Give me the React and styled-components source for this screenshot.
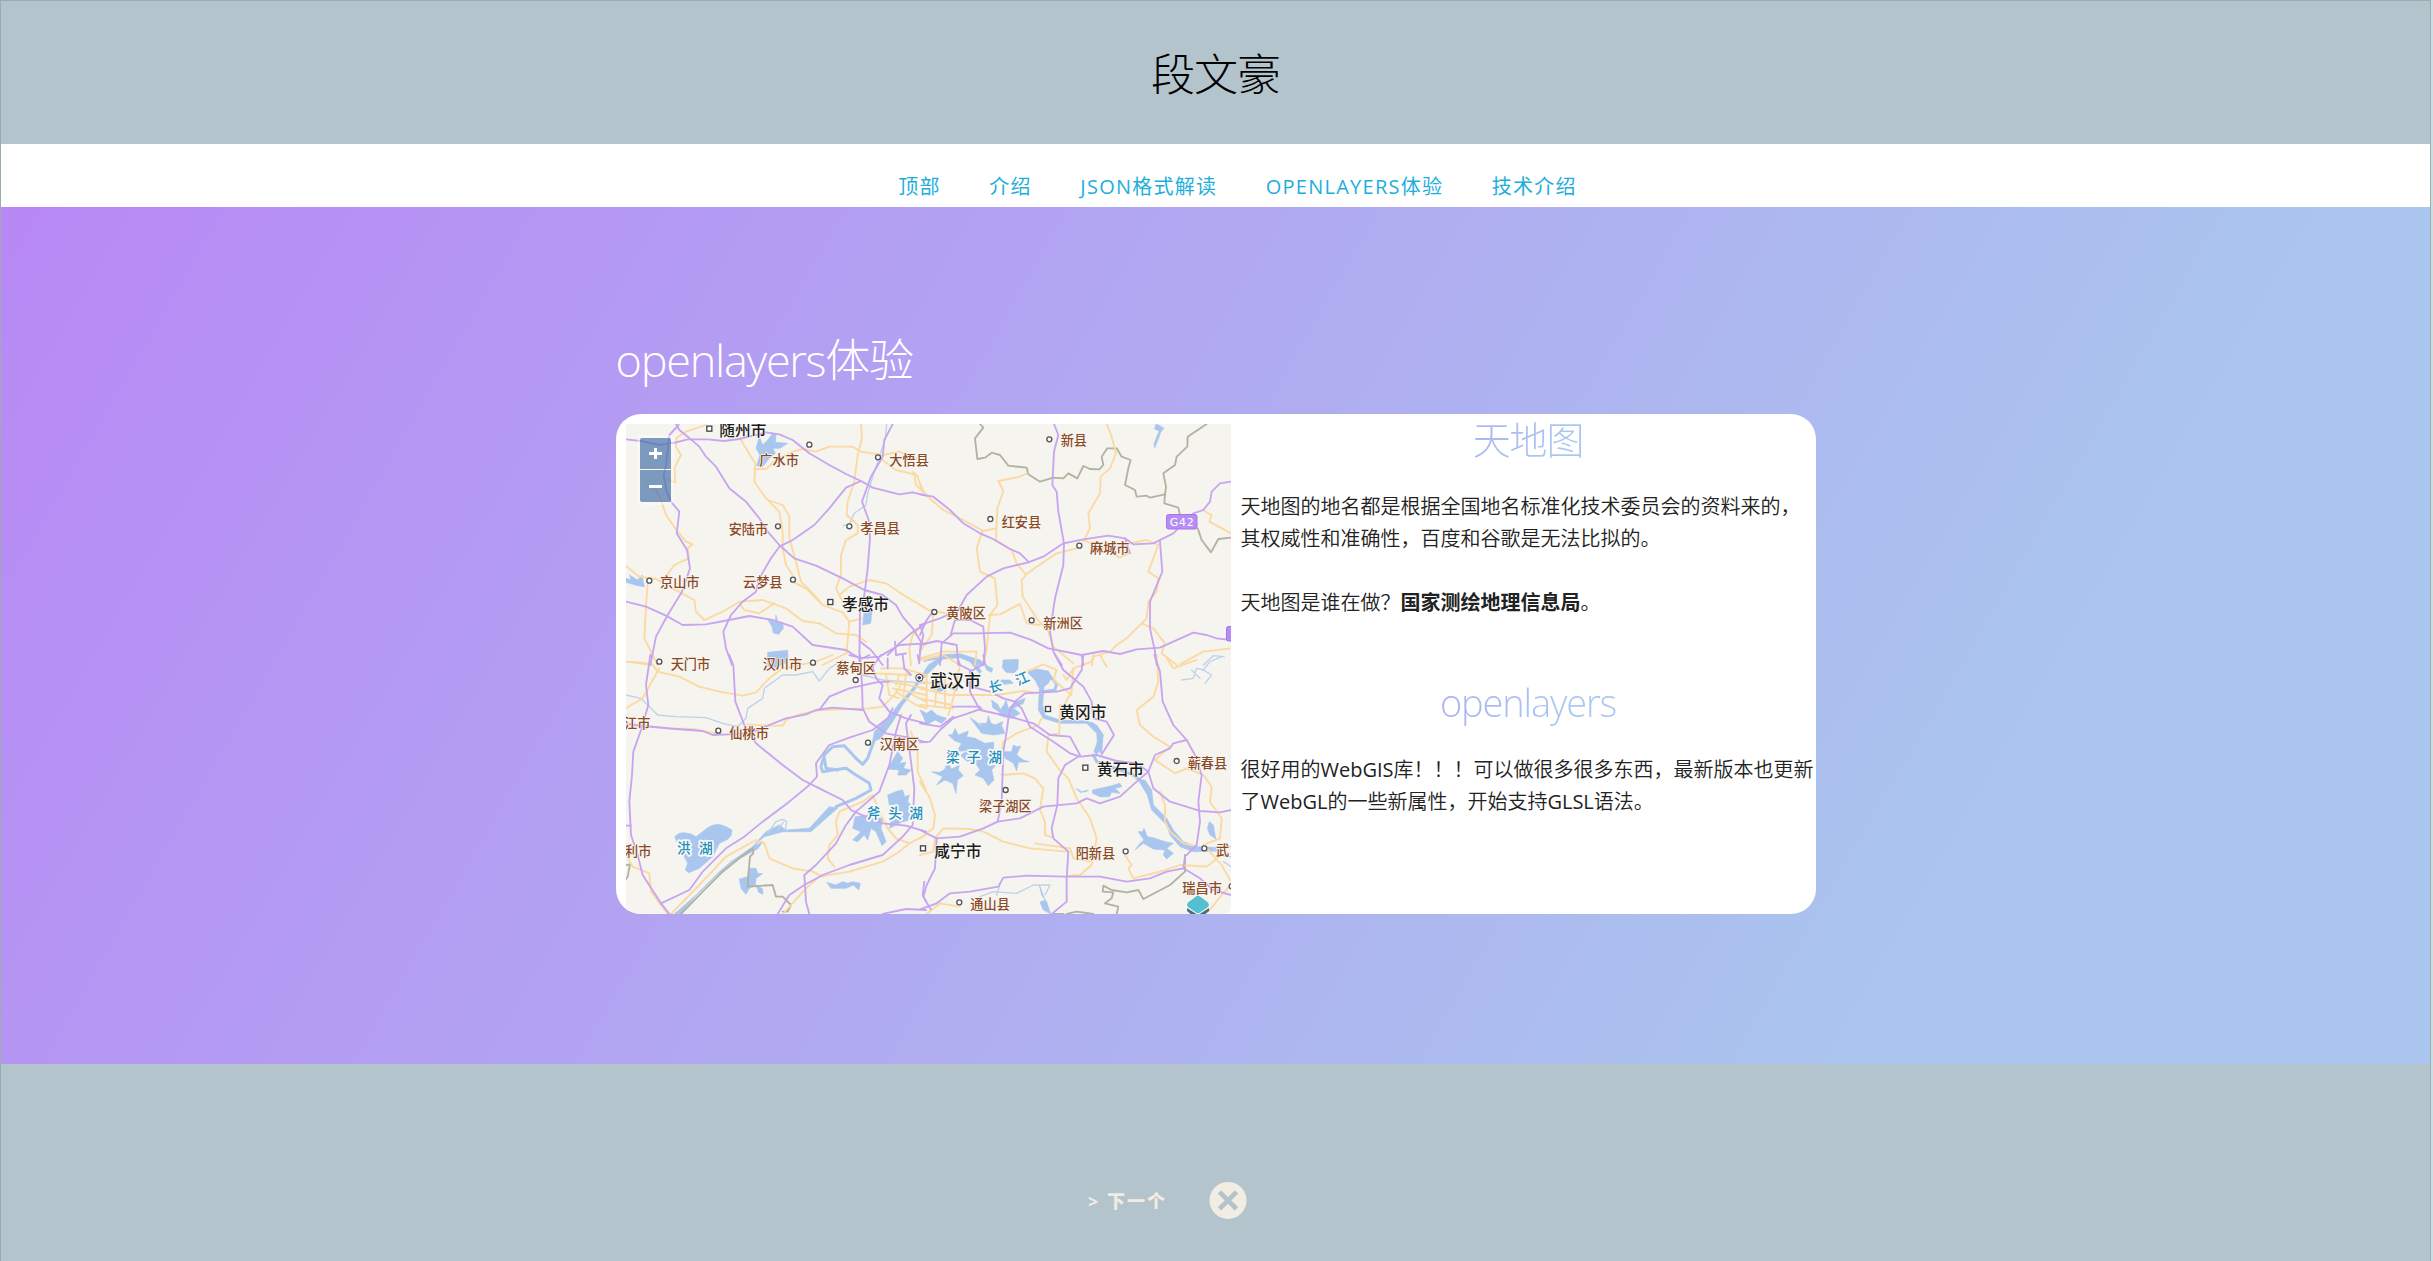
import React from "react";
import styled, { createGlobalStyle } from "styled-components";

const GlobalStyle = createGlobalStyle`
  * { box-sizing: border-box; }
  body {
    margin: 0;
    background: #cbdfe2;
    font-family: "Open Sans", "Noto Sans CJK SC", sans-serif;
  }
`;

const Page = styled.div`
  display: flex;
  flex-direction: column;
  width: 2431px;
  height: 1261px;
  overflow: hidden;
  background: #b4c4cc;
  border: 1px solid #9aacb0;
  border-bottom: 0;
`;

const Header = styled.header`
  flex: 0 0 143px;
  display: flex;
  align-items: center;
  justify-content: center;
  padding-top: 2px;
`;

const Name = styled.h1`
  margin: 0;
  font-size: 44px;
  line-height: 60px;
  font-weight: 300;
  letter-spacing: -1px;
  color: #000;
`;

const Nav = styled.nav`
  flex: 0 0 63px;
  display: flex;
  justify-content: center;
  align-items: center;
  gap: 48.5px;
  padding: 23px 0 0 44px;
  background: #fff;
`;

const NavLink = styled.a`
  font-size: 20px;
  line-height: 32px;
  letter-spacing: 1.25px;
  font-weight: 400;
  color: #1eaedb;
  text-transform: uppercase;
  white-space: nowrap;
`;

const Section = styled.section`
  flex: 0 0 857px;
  display: flex;
  justify-content: center;
  padding-top: 123px;
  background: linear-gradient(120deg, #b888f5 0%, #aac5ee 80%, #abc6ee 100%);
`;

const Container = styled.div`
  width: 1200px;
`;

const Title = styled.h2`
  margin: 0 0 24px;
  height: 60px;
  font-size: 45px;
  line-height: 60px;
  font-weight: 300;
  letter-spacing: -1.25px;
  color: #fff;
`;

const Card = styled.div`
  display: flex;
  gap: 10px;
  height: 500px;
  padding: 10px 0 0 10px;
  overflow: hidden;
  background: #fff;
  border-radius: 25px;
`;

const MapBox = styled.div`
  position: relative;
  flex: 0 0 605px;
  height: 490px;
  overflow: hidden;
  border-bottom-right-radius: 6px;
  background: #f5f4ef;

  svg {
    display: block;
  }
`;

const ZoomControl = styled.div`
  position: absolute;
  left: 11px;
  top: 11px;
  display: grid;
  gap: 1px;
  padding: 3px;
  border-radius: 5px;
  background: rgba(255, 255, 255, 0.4);
`;

const ZoomButton = styled.button`
  display: flex;
  justify-content: center;
  align-items: center;
  width: 31px;
  height: ${(p) => p.$height}px;
  padding: 0;
  border: 0;
  border-radius: ${(p) => p.$radius};
  background: rgba(0, 60, 136, 0.5);
`;

const Copy = styled.div`
  flex: 0 0 575px;
`;

const SubTitle = styled.h3`
  margin: ${(p) => p.$top}px 0 ${(p) => p.$bottom}px;
  font-size: 38px;
  line-height: 50px;
  font-weight: 300;
  letter-spacing: -1.15px;
  text-align: center;
  color: transparent;
  background: linear-gradient(120deg, #b888f5 0%, #a9c8f0 56%, #abc6ee 100%);
  background-clip: text;
`;

const Paragraph = styled.p`
  margin: 0 0 32px;
  font-size: 20px;
  line-height: 32px;
  font-weight: 350;
  color: #222;
  white-space: nowrap;

  b {
    font-weight: 700;
  }
`;

const Latin = styled.span`
  font-weight: 400;
`;

const Footer = styled.footer`
  flex: 1;
  display: flex;
  align-items: flex-start;
  padding: 117px 0 0 1087px;
  gap: 42px;
`;

const NextLink = styled.a`
  font-size: 18px;
  line-height: 40px;
  font-weight: 900;
  letter-spacing: 2px;
  color: #f2ede2;
  white-space: nowrap;
`;

const Angle = styled.span`
  font-weight: 700;
`;

const QUADRANTS = [
  {
    at: [-10, -19],
    water: [
      "M430,95 440,120 455,105 470,85 480,88 478,112 515,115 492,130 470,130 478,145 460,160 440,185 422,182 432,150 420,130Z",
      "M480,630 485,650 500,652 502,670 488,688 472,684 468,665 456,645 478,650Z",
      "M745,615 768,618 764,655 740,660Z",
      "M455,742 515,736 515,770 480,788 455,782Z",
      "M30,520 45,525 40,510 65,525 78,510 85,545 65,542 50,538 30,532Z",
    ],
    stream: ["M812,57 808,100 795,140 775,200 755,265 750,300 715,325 700,358 682,362"],
    orange: [
      "M270,60 210,80 182,98 180,125 195,150 175,190 178,232 155,225",
      "M90,240 120,255 135,285 150,330 185,380 210,410 230,418 215,430 218,460 175,480 145,520",
      "M372,100 390,130 405,155 418,175 415,230 450,280 490,320 500,380 500,430 510,480 530,510",
      "M415,192 450,192 480,165 530,140 560,132 600,140 640,125 710,125 735,140 800,150 850,140 900,160",
      "M455,285 500,300 520,335 520,400 540,470 555,530 600,575 615,595",
      "M735,57 738,100 725,150 715,230 695,290 692,330 725,360 725,385 690,405 675,450 675,510 660,550 680,590",
      "M800,165 840,195 895,208 900,240 930,268",
      "M890,200 905,215 920,260",
      "M30,483 70,515 120,522 170,550 235,585 240,620 265,645 320,620 370,590 440,585 510,610 560,648 610,655 660,685 720,690 750,710",
      "M95,540 90,600 85,700 100,730 125,780",
      "M370,595 385,615 430,625 475,595",
      "M530,530 570,550 620,600 680,622 700,650 692,740",
      "M670,570 700,545 760,525 810,535 870,575 930,610",
      "M0,770 70,772 110,778",
      "M620,780 700,740 M700,650 740,640",
      "M885,780 880,730 890,690 930,650",
    ],
    purple: [
      "M30,103 75,108 130,120 180,112 215,103 275,103 325,108 370,102 410,92 450,82 490,88 530,105 580,145 640,180 690,207 735,228 770,248 850,268 890,262 930,272",
      "M180,57 190,75 215,95 250,125 270,155 300,185 340,250 390,290 430,340 455,380 490,420 535,460 600,482 680,520 745,555 800,570 840,600 860,635 890,670 915,710 910,770",
      "M188,60 160,90 150,180 143,210 152,260 165,290 190,320 182,385 213,435 222,490 198,560 155,630 120,695 103,780",
      "M735,228 690,248 640,310 595,360 530,405 490,425 465,460 430,520 420,560 380,590 345,630 322,680 330,730 348,780",
      "M30,590 90,605 150,632 200,660 270,658 340,645 400,633 470,645 530,665 590,720 690,735 730,760 790,755 850,720 930,715",
      "M830,57 805,105 800,155 765,215 738,290 758,345 762,400 755,490 745,570 732,620 730,780",
      "M730,708 765,735 800,780",
      "M837,710 840,750 870,745 M930,655 885,685 850,715 815,750",
    ],
    border: [],
    labels: [
      ["city", 310, 77, "随州市"],
      ["town", 430, 166, "广水市"],
      ["town", 820, 164, "大悟县"],
      ["town", 338, 372, "安陆市"],
      ["town", 733, 370, "孝昌县"],
      ["town", 132, 532, "京山市"],
      ["town", 381, 532, "云梦县"],
      ["city", 678, 597, "孝感市"],
    ],
    dots: [[580, 119], [786, 157], [486, 364], [700, 364], [100, 527], [531, 524]],
    squares: [[280, 71], [643, 591]],
  },
  {
    at: [294, -19],
    water: [
      "M708,57 720,62 732,70 722,82 716,100 704,128 702,118 710,95 718,78 704,72Z",
      "M250,766 294,764 294,780 250,780Z",
      "M10,770 60,750 120,746 180,765 200,780 175,780 120,756 60,760Z",
    ],
    stream: ["M850,780 880,752 912,755"],
    orange: [
      "M560,57 575,95 588,145 570,190 542,215 540,265 505,325 510,370 490,410",
      "M320,205 300,215 235,228 250,258 232,310 228,405",
      "M0,235 15,268 70,315 130,345 190,378 228,370",
      "M187,380 170,430 180,500 225,520 232,600 210,630 200,735 190,780",
      "M228,405 275,435 290,475 318,510 305,525 308,575 350,640 385,680 400,725 460,775",
      "M316,510 350,485 410,445 470,430",
      "M490,405 520,418 575,440 598,458 625,445",
      "M207,630 240,628 300,597 320,655 360,660",
      "M630,415 680,405 715,420 685,500 715,520 710,560 685,590 680,640 665,655 620,700 590,720 570,740 520,755 515,780",
      "M665,655 700,670 735,715 725,745 770,780",
      "M780,778 850,740 933,730",
      "M848,315 875,330 868,350 933,385",
      "M0,600 25,615 80,625 M40,625 35,690 0,740",
      "M0,760 70,740 170,740 165,780",
    ],
    purple: [
      "M0,268 40,275 90,315 130,355 180,385 215,400 270,432 300,445 325,470",
      "M402,57 415,90 402,140 397,240 410,260 415,320 432,415 430,480 405,580 390,680 400,740 425,780",
      "M0,660 60,640 115,615 140,570 200,515 250,490 325,472 370,455 430,415 490,403 565,392 615,400 640,418 700,415 760,385 820,325 850,315 870,290 875,260 900,235 933,230",
      "M615,400 630,445",
      "M720,410 727,500 690,590 690,670 705,740 710,780",
      "M0,720 50,708 110,720 115,780",
      "M60,780 65,715 100,685 170,685 270,683 330,703 385,730 485,750 550,738 600,747 650,733 720,728 760,710 820,683 860,690 890,700 933,705",
      "M92,690 105,645 150,645 190,665 195,730 190,780",
      "M0,690 20,645 35,625 M485,750 490,780 M0,660 10,690 0,740",
    ],
    border: [
      "M180,57 190,68 165,100 172,162 195,158 215,143 240,150 265,182 320,188 325,208 360,230 400,218 430,220 445,205 472,220 490,183 510,192 538,193 550,180 545,155 562,130 590,130 605,155 632,165 625,190 615,240 645,255 650,275 680,272 690,278 735,268 738,245 730,205 765,180 770,155 802,125 803,95 860,57",
      "M735,268 733,295 775,308 780,330 M833,370 845,405 873,442 895,402 933,398",
    ],
    labels: [
      ["town", 422, 106, "新县"],
      ["town", 245, 350, "红安县"],
      ["town", 510, 428, "麻城市"],
      ["town", 79, 625, "黄陂区"],
      ["town", 370, 653, "新洲区"],
    ],
    dots: [[388, 103], [211, 342], [478, 422], [43, 621], [335, 646]],
    squares: [],
  },
  {
    at: [-10, 231],
    water: [
      "M176,545 190,535 205,533 225,537 240,545 260,530 275,518 292,510 310,508 330,515 348,525 345,542 335,553 310,565 290,605 250,640 218,653 208,645 215,625 205,605 190,580Z",
      "M398,640 420,640 425,655 440,656 420,670 418,690 400,700 390,718 375,700 370,672 395,665Z",
      "M420,690 440,702 440,718 428,712Z",
      "M632,682 660,690 680,680 695,685 710,680 733,685 728,705 712,690 690,700 645,700Z",
      "M845,290 860,310 850,325 870,322 862,340 885,345 870,360 845,360 850,345 815,342Z",
      "M815,420 845,408 860,405 866,425 880,420 875,440 885,450 900,490 860,500 820,520 825,500 850,480 820,450Z",
      "M718,485 760,480 800,490 795,520 810,560 798,572 780,530 765,520 755,555 745,540 725,560 710,555 735,530 710,520Z",
      "M925,55 900,100 860,150 830,200 795,250 770,260 775,230 820,185 850,145 885,105 910,70Z",
      "M175,777 240,720 310,650 345,620 410,575 440,560 425,582 350,622 310,655 240,722 195,777Z",
      "M410,575 450,530 490,510 510,525 580,520 640,455 665,460 630,490 585,530 500,530 445,545Z",
      "M460,0 515,0 515,6 485,10Z",
    ],
    river: ["M660,455 720,430 765,405 760,385 720,360 690,340 650,345 620,350 615,335 625,300 650,275 685,272 720,310 740,328 755,310 775,255", "M625,310 630,340 665,345"],
    stream: [
      "M30,120 75,130 100,155 125,180 180,185 270,188 320,205 365,215 390,190 395,160 440,130 445,100 500,60 540,60 590,50 610,78 640,40 680,15 M740,60 800,75 930,85",
      "M455,535 480,500 500,493 512,500 508,525 M485,525 502,502",
    ],
    orange: [
      "M30,20 110,30 125,50 190,65 250,95 310,110 380,122 420,112 460,70 500,40 600,20 650,0",
      "M130,40 110,75 80,130 30,160",
      "M0,200 80,212 160,220 230,222 300,235",
      "M395,208 460,212 500,212 510,195 545,180 610,165 760,160 800,155 840,115 858,80",
      "M30,600 50,635 100,655 105,710 155,777",
      "M165,777 250,690 330,605 420,555 445,565 460,610 530,640 590,650 620,665",
      "M500,777 570,700 610,665 700,650 800,620 850,590 880,565 930,540",
      "M880,565 840,550 815,520 790,470 770,420 740,440 670,470 660,500 665,540 640,570 635,610 655,635",
      "M885,230 905,290 905,350 930,405",
      "M780,55 880,60 M810,60 820,120 850,130 M820,80 930,100 M830,100 930,120 M870,55 862,130 M840,110 900,150 930,160 M850,60 840,90 M795,40 860,40 930,60 M890,120 930,140",
    ],
    purple: [
      "M103,0 90,90 97,150 75,225 52,290 48,360 40,440 45,540 65,600 80,660 135,745 160,777",
      "M340,0 352,30 358,140 385,210 420,265 500,330 560,375 610,400 680,435 705,465 760,490 800,505 870,512 930,530",
      "M30,207 80,213 180,222 260,228 290,240 340,238 400,235 460,210 510,190 570,178 600,165 650,158 740,165",
      "M610,165 640,125 700,100 780,82 820,80",
      "M830,160 815,190 770,225 700,248 640,270 600,325 603,365 580,390 520,440 440,500 385,545 330,580 260,650 220,705 135,745",
      "M885,180 870,205 885,320 895,400 890,510 860,545 800,600 700,630 620,660 565,690 520,720 485,777",
      "M855,180 840,230 820,330 790,410 720,470 690,510 660,565 600,630 565,660 570,740 580,777",
      "M732,0 738,90 740,160 760,200 810,235 890,250 930,262",
      "M795,0 770,35 780,70 800,90 790,130 820,170 870,190 930,205",
      "M700,0 740,10 760,0 M815,10 815,40 M860,0 865,40 885,60 M905,0 910,25",
      "M800,777 870,762 930,765 M925,680 920,720 930,740 M30,512 45,512",
    ],
    border: ["M195,777 260,710 320,650 370,610 410,580 412,595 402,605 398,650 395,695 470,690 480,725 500,725 525,750 515,770 500,770", "M30,630 42,628 35,665 28,675"],
    labels: [
      ["town", 164, 26, "天门市"],
      ["town", 440, 26, "汉川市"],
      ["town", 661, 38, "蔡甸区"],
      ["town", 24, 205, "江市"],
      ["town", 340, 233, "仙桃市"],
      ["town", 791, 268, "汉南区"],
      ["town", 27, 587, "利市"],
      ["lake", 183, 578, "洪"],
      ["lake", 249, 578, "湖"],
      ["lake", 752, 474, "斧"],
      ["lake", 817, 474, "头"],
      ["lake", 880, 474, "湖"],
    ],
    dots: [[130, 20], [591, 23], [719, 75], [307, 227], [756, 263]],
    squares: [[921, 580]],
  },
  {
    at: [294, 231],
    water: [
      "M250,15 294,14 294,42 282,54 258,52 247,38Z",
      "M0,70 25,30 70,0 130,0 165,20 185,50 178,55 150,20 120,8 70,12 35,45 5,75Z",
      "M0,165 20,175 35,165 50,180 80,190 65,205 45,195 20,210 10,185Z",
      "M190,20 205,35 218,40 215,52 200,45Z",
      "M35,100 55,85 80,100 60,110Z M90,100 115,92 110,108Z",
      "M215,135 235,150 240,165 252,150 258,135 265,160 290,140 315,130 310,145 280,160 300,175 275,190 250,185 235,180 240,172 218,158Z",
      "M180,205 200,205 205,182 213,205 225,210 248,200 245,212 255,235 220,240 185,235 150,188 190,215Z",
      "M85,240 98,238 105,220 115,240 145,228 140,245 165,250 195,265 222,262 220,280 242,290 228,330 215,345 222,375 205,392 190,370 165,360 180,345 165,322 140,318 120,300 150,285 110,290 125,265 105,258Z",
      "M250,290 275,290 280,270 290,275 302,273 290,300 310,315 328,320 295,322 290,348 280,325 270,318 255,310Z",
      "M35,350 60,352 75,342 82,322 95,342 118,330 115,345 130,362 112,375 108,415 98,385 75,375 50,390 68,365Z",
      "M518,405 550,398 575,392 600,385 605,395 585,400 600,415 575,412 568,425 540,425 518,415Z",
      "M468,400 485,410 505,405 500,410 480,412Z",
      "M645,585 660,565 672,555 655,530 668,530 672,520 682,545 700,548 735,560 760,565 740,580 760,595 740,612 730,600 735,585 700,582 670,565Z",
      "M868,500 880,510 885,540 888,552 870,540 862,520Z",
      "M320,50 350,42 385,48 395,65 385,85 372,95 368,150 375,180 420,195 500,198 530,210 550,240 545,275 530,298 522,290 532,260 530,235 500,205 420,205 370,190 355,165 358,100 345,75Z",
      "M655,375 675,375 695,405 700,450 740,490 760,525 790,560 830,575 895,578 895,588 820,590 780,575 750,540 740,510 695,465 682,420Z",
      "M0,62 8,62 0,70Z",
      "M358,690 365,720 380,740 392,777 370,765 360,742 375,735Z",
      "M225,75 270,75 280,85 230,90Z",
    ],
    river: ["M520,300 530,320 600,345 640,360 665,380", "M515,205 545,240 542,290", "M350,50 385,60 410,85 405,105 370,110"],
    stream: [
      "M785,75 820,70 830,40 850,45 870,20 905,5 M850,45 875,60 855,85 M815,45 840,70",
      "M180,725 220,710 290,715 340,690 390,690 375,720 M230,720 240,688",
      "M895,600 933,605 M910,620 933,635 M880,585 933,575",
    ],
    orange: [
      "M0,15 70,0 M70,0 120,30 100,130 85,180 M0,100 90,120 230,120 310,108 360,115",
      "M0,80 100,90 M0,130 95,150 M20,60 20,160 M50,85 45,155 M75,70 75,160 M0,150 100,160",
      "M520,0 515,20 460,40 440,75 430,60 M460,40 455,110 430,155 420,150 M420,150 418,235 385,240 380,290 415,340 445,370 470,430 510,490 530,550 515,630 480,660 440,663",
      "M365,190 355,210 290,235 250,260 245,290",
      "M320,50 370,28 410,45 400,75 455,120",
      "M245,360 310,355 345,370 370,400 360,465 375,500 375,540 400,548",
      "M0,380 30,430 45,480 40,520 0,550",
      "M0,600 40,590 45,550 70,520 150,522 190,530 250,560 330,580 440,590 M345,565 450,580 460,610 515,620",
      "M710,0 715,80 700,125 650,165 660,210 700,245 750,275 705,315 765,355 800,340 850,360 875,395 870,440 905,490 900,550 850,570",
      "M740,10 760,40 830,15 M720,410 735,450 735,500 750,530 790,565 820,572",
      "M615,600 635,630 625,640 640,670 720,650 780,630 860,635 885,615 900,600",
      "M860,580 905,630 933,680 M865,770 905,720 933,690",
      "M20,777 60,745 120,755 M560,35 540,0",
    ],
    purple: [
      "M110,0 120,30 150,45 150,110 180,165 270,185 340,205 390,240 450,245 480,300",
      "M190,0 195,25 150,50 M0,262 30,260 60,225 100,190 160,170 185,160 M98,155 180,155 M0,205 60,215 100,185",
      "M155,95 210,110 250,130 285,140 305,160 330,215 400,260 450,295 480,305 530,300 590,318 650,325 685,350 700,400 750,440 840,468 900,472 933,465",
      "M405,0 430,45 490,95 515,140 520,190 560,200 582,240 545,298",
      "M490,0 485,45 450,100 410,110 315,115 285,140 268,170 260,230 250,290 245,440 233,500",
      "M703,0 720,50 728,140 760,210 800,255 825,300 845,360 835,440 840,500 830,570 795,605 790,640",
      "M685,350 705,300 750,280 760,265 800,255",
      "M478,303 435,330 415,370 412,450 395,520 400,550 445,590 440,670 440,740 395,777",
      "M0,525 50,550 120,545 190,520 233,500 300,490 370,455 470,445 500,430 540,445 600,425 650,380 685,350",
      "M50,550 45,640 20,690 10,725 32,763 M0,763 50,745 90,715 150,710 235,695 250,668 320,662 440,665 540,665 620,680 690,670 740,650 790,640 840,670 880,705 933,720",
    ],
    border: ["M395,777 430,777 M795,600 795,650 750,690 670,732 655,705 620,712 575,705 550,692 548,710 580,712 575,730 555,745 595,755 590,777 M440,777 470,770 520,777"],
    labels: [
      ["capital", 30, 76, "武汉市"],
      ["lake", 206, 94, "长", -12],
      ["lake", 286, 70, "江", -24],
      ["city", 418, 171, "黄冈市"],
      ["city", 531, 344, "黄石市"],
      ["lake", 78, 307, "梁"],
      ["lake", 140, 307, "子"],
      ["lake", 205, 307, "湖"],
      ["town", 803, 325, "蕲春县"],
      ["town", 177, 453, "梁子湖区"],
      ["city", 43, 588, "咸宁市"],
      ["town", 467, 595, "阳新县"],
      ["town", 888, 585, "武"],
      ["town", 787, 699, "瑞昌市"],
      ["town", 151, 747, "通山县"],
    ],
    dots: [[770, 318], [257, 405], [617, 589], [853, 580], [118, 742], [935, 694]],
    squares: [[384, 162], [496, 338]],
  },
];

const LABEL_STYLES = {
  town: { size: 39.5, fill: "#8b4a25", weight: 500 },
  city: { size: 47, fill: "#1c1c1c", weight: 500 },
  capital: { size: 51, fill: "#1c1c1c", weight: 500 },
  lake: { size: 41, fill: "#1b8fbd", weight: 500 },
};

const place = (q) => `translate(${q.at[0]} ${q.at[1]}) scale(0.33333)`;

function Strokes({ paths, color, width }) {
  return (paths || []).map((d) => (
    <path key={d} d={d} fill="none" stroke={color} strokeWidth={width} strokeLinejoin="round" strokeLinecap="round" />
  ));
}

function Label({ kind, x, y, text, angle = 0 }) {
  const s = LABEL_STYLES[kind];
  return (
    <text
      x={x}
      y={y + s.size * 0.37}
      fontSize={s.size}
      fontWeight={s.weight}
      fill={s.fill}
      stroke="#f9f8f5"
      strokeWidth={kind === "lake" ? 11 : 4}
      strokeLinejoin="round"
      paintOrder="stroke"
      transform={angle ? `rotate(${angle} ${x + 20} ${y})` : undefined}
    >
      {text}
    </text>
  );
}

function RoadMap() {
  return (
    <svg width="605" height="490" viewBox="0 0 605 490" fontFamily='"Noto Sans CJK SC", sans-serif'>
      {QUADRANTS.map((q, i) => (
        <g key={i} transform={place(q)}>
          {q.water.map((d) => (
            <path key={d} d={d} fill="#a9c6ee" stroke="#a9c6ee" strokeWidth="2" strokeLinejoin="round" />
          ))}
          <Strokes paths={q.river} color="#a9c6ee" width={9} />
          <Strokes paths={q.stream} color="#bcd3ea" width={4} />
        </g>
      ))}
      {QUADRANTS.map((q, i) => (
        <g key={i} transform={place(q)}>
          <Strokes paths={q.border} color="#b1b3a0" width={5.5} />
          <Strokes paths={q.orange} color="#fbd9a0" width={5.5} />
        </g>
      ))}
      {QUADRANTS.map((q, i) => (
        <g key={i} transform={place(q)}>
          <Strokes paths={q.purple} color="#c7a5f0" width={5.5} />
        </g>
      ))}
      {QUADRANTS.map((q, i) => (
        <g key={i} transform={place(q)}>
          {q.dots.map(([x, y]) => (
            <circle key={`${x}-${y}`} cx={x} cy={y} r="7.5" fill="#fff" stroke="#555" strokeWidth="4" />
          ))}
          {q.squares.map(([x, y]) => (
            <rect key={`${x}-${y}`} x={x - 7.5} y={y - 7.5} width="15" height="15" fill="#fff" stroke="#444" strokeWidth="4" />
          ))}
          {q.labels.map(([kind, x, y, text, angle]) => (
            <Label key={text + x} kind={kind} x={x} y={y} text={text} angle={angle} />
          ))}
        </g>
      ))}
      <circle cx="293.3" cy="253.7" r="3.6" fill="#fff" stroke="#444" strokeWidth="1" />
      <circle cx="293.3" cy="253.7" r="1.8" fill="#4a2a90" />
      <rect x="540.5" y="90.5" width="30.5" height="14.5" rx="2" fill="#b78cf3" stroke="#a873f0" />
      <text x="555.8" y="102" fontSize="11" textAnchor="middle" fill="#fff" fontFamily="DejaVu Sans, sans-serif" textLength="24">
        G42
      </text>
      <rect x="600.5" y="202.5" width="20" height="14.5" rx="2" fill="#b78cf3" stroke="#a873f0" />
      <path d="M561,484 L572,491 L583,484 L583,487 L577,492 L567,492 L561,487Z" fill="#4b6f7c" />
      <path d="M562,478.6 L570,472.4 Q572,471 574,472.4 L582,478.6 Q583.6,480.5 582,483 L574,488.6 Q572,490 570,488.6 L562,483 Q560.4,480.5 562,478.6Z" fill="#52c0d0" />
    </svg>
  );
}

function Symbol({ plus }) {
  return (
    <svg width="13" height="13" viewBox="0 0 13 13" stroke="#fff" strokeWidth="3">
      <path d={plus ? "M0,6.5H13 M6.5,1V12" : "M0,6.5H13"} />
    </svg>
  );
}

function CloseIcon() {
  return (
    <svg width="38" height="38" viewBox="0 0 38 38">
      <circle cx="19" cy="19.4" r="18.5" fill="#f2ede2" />
      <path d="M12.2,12.6 L25.8,26.2 M25.8,12.6 L12.2,26.2" stroke="#b4c4cc" strokeWidth="4.8" strokeLinecap="square" />
    </svg>
  );
}

const LINKS = ["顶部", "介绍", "JSON格式解读", "openlayers体验", "技术介绍"];

export default function App() {
  return (
    <Page>
      <GlobalStyle />
      <Header>
        <Name>段文豪</Name>
      </Header>
      <Nav>
        {LINKS.map((label) => (
          <NavLink key={label}>{label}</NavLink>
        ))}
      </Nav>
      <Section>
        <Container>
          <Title>openlayers体验</Title>
          <Card>
            <MapBox>
              <RoadMap />
              <ZoomControl>
                <ZoomButton $height={31} $radius="2px 2px 0 0" aria-label="+">
                  <Symbol plus />
                </ZoomButton>
                <ZoomButton $height={32} $radius="0 0 2px 2px" aria-label="−">
                  <Symbol />
                </ZoomButton>
              </ZoomControl>
            </MapBox>
            <Copy>
              <SubTitle $top={-10} $bottom={27}>天地图</SubTitle>
              <Paragraph>
                天地图的地名都是根据全国地名标准化技术委员会的资料来的，
                <br />
                其权威性和准确性，百度和谷歌是无法比拟的。
              </Paragraph>
              <Paragraph>
                天地图是谁在做？<b>国家测绘地理信息局</b>。
              </Paragraph>
              <SubTitle $top={58} $bottom={27}>openlayers</SubTitle>
              <Paragraph>
                很好用的<Latin>WebGIS</Latin>库！！！可以做很多很多东西，最新版本也更新
                <br />了<Latin>WebGL</Latin>的一些新属性，开始支持<Latin>GLSL</Latin>语法。
              </Paragraph>
            </Copy>
          </Card>
        </Container>
      </Section>
      <Footer>
        <NextLink><Angle>&gt;</Angle> 下一个</NextLink>
        <CloseIcon />
      </Footer>
    </Page>
  );
}
